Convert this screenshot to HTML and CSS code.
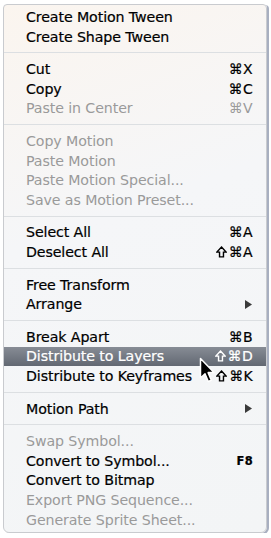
FILE: index.html
```html
<!DOCTYPE html>
<html lang="en">
<head>
    <meta charset="UTF-8">
    <meta name="viewport" content="width=device-width, initial-scale=1.0">
    <title>Context Menu</title>
    <link rel="stylesheet" href="styles.css">
</head>
<body>

<div class="menu">
    <div class="item"><span>Create Motion Tween</span></div>
    <div class="item"><span>Create Shape Tween</span></div>
    <div class="sep"></div>

    <div class="item"><span>Cut</span><span class="key">&#8984;X</span></div>
    <div class="item"><span>Copy</span><span class="key">&#8984;C</span></div>
    <div class="item off"><span>Paste in Center</span><span class="key">&#8984;V</span></div>
    <div class="sep"></div>

    <div class="item off"><span>Copy Motion</span></div>
    <div class="item off"><span>Paste Motion</span></div>
    <div class="item off"><span>Paste Motion Special...</span></div>
    <div class="item off"><span>Save as Motion Preset...</span></div>
    <div class="sep"></div>

    <div class="item"><span>Select All</span><span class="key">&#8984;A</span></div>
    <div class="item"><span>Deselect All</span><span class="key"><svg class="shift" viewBox="0 0 10 11"><path d="M5 1 L9.2 5.6 L6.8 5.6 L6.8 10 L3.2 10 L3.2 5.6 L0.8 5.6 Z"/></svg>&#8984;A</span></div>
    <div class="sep"></div>

    <div class="item"><span>Free Transform</span></div>
    <div class="item"><span>Arrange</span><svg class="arrow" viewBox="0 0 7 9"><path d="M0 0 L7 4.5 L0 9 Z"/></svg></div>
    <div class="sep"></div>

    <div class="item"><span>Break Apart</span><span class="key">&#8984;B</span></div>
    <div class="item active"><span>Distribute to Layers</span><span class="key"><svg class="shift" viewBox="0 0 10 11"><path d="M5 1 L9.2 5.6 L6.8 5.6 L6.8 10 L3.2 10 L3.2 5.6 L0.8 5.6 Z"/></svg>&#8984;D</span></div>
    <div class="item"><span>Distribute to Keyframes</span><span class="key"><svg class="shift" viewBox="0 0 10 11"><path d="M5 1 L9.2 5.6 L6.8 5.6 L6.8 10 L3.2 10 L3.2 5.6 L0.8 5.6 Z"/></svg>&#8984;K</span></div>
    <div class="sep"></div>

    <div class="item"><span>Motion Path</span><svg class="arrow" viewBox="0 0 7 9"><path d="M0 0 L7 4.5 L0 9 Z"/></svg></div>
    <div class="sep"></div>

    <div class="item off"><span>Swap Symbol...</span></div>
    <div class="item"><span>Convert to Symbol...</span><span class="key small">F8</span></div>
    <div class="item"><span>Convert to Bitmap</span></div>
    <div class="item off"><span>Export PNG Sequence...</span></div>
    <div class="item off"><span>Generate Sprite Sheet...</span></div>

    <!-- mouse pointer over the menu -->
    <svg class="cursor" width="16" height="27" viewBox="0 0 16 27">
        <path d="M1.5 1.5 L1.5 21 L6 16.8 L9.3 24.5 L12.3 23.2 L9.1 15.6 L15 15.6 Z" fill="#000" stroke="#fff" stroke-width="1.5" stroke-linejoin="round"/>
    </svg>
</div>

</body>
</html>
```

FILE: styles.css
```css
body {
    margin: 0;
    background-color: #fff;
    font-family: 'DejaVu Sans', 'Liberation Sans', sans-serif;
}

.menu {
    position: relative;
    margin: 4px 0 0 3px;
    width: 262px;
    padding: 2px 0 2px 0;
    background: linear-gradient(160deg, #fbf5ef 0%, #f5f6f8 40%, #f3f5f6 100%);
    border: 1px solid #c9cbcf;
    border-radius: 4px 4px 6px 6px;
    box-shadow: 2px 1px 0 #a8afc0;
}

.item {
    display: flex;
    align-items: center;
    justify-content: space-between;
    height: 19.7px;
    padding: 0 13px 0 22px;
    font-size: 14.2px;
    color: #000;
    letter-spacing: -0.1px;
    -webkit-text-stroke: 0.2px currentColor;
}

.item.off {
    color: #9a9a9a;
    -webkit-text-stroke: 0;
}

.item.active {
    background: linear-gradient(#878c95, #626872);
    color: #fff;
}

.key {
    display: flex;
    align-items: center;
    font-size: 14px;
    letter-spacing: 0.3px;
}

.key.small {
    font-size: 11.5px;
    font-weight: bold;
}

.shift {
    width: 11px;
    height: 12px;
    margin-right: 2px;
    fill: none;
    stroke: currentColor;
    stroke-width: 1.3;
    stroke-linejoin: miter;
}

.arrow {
    width: 7px;
    height: 9px;
    margin-right: 1px;
    fill: #3a3a3a;
}

.sep {
    height: 12.8px;
    display: flex;
    align-items: center;
}

.sep::before {
    content: '';
    display: block;
    width: 100%;
    height: 1px;
    background-color: #dcdfe2;
}

.cursor {
    position: absolute;
    left: 195px;
    top: 352px;
}
```
